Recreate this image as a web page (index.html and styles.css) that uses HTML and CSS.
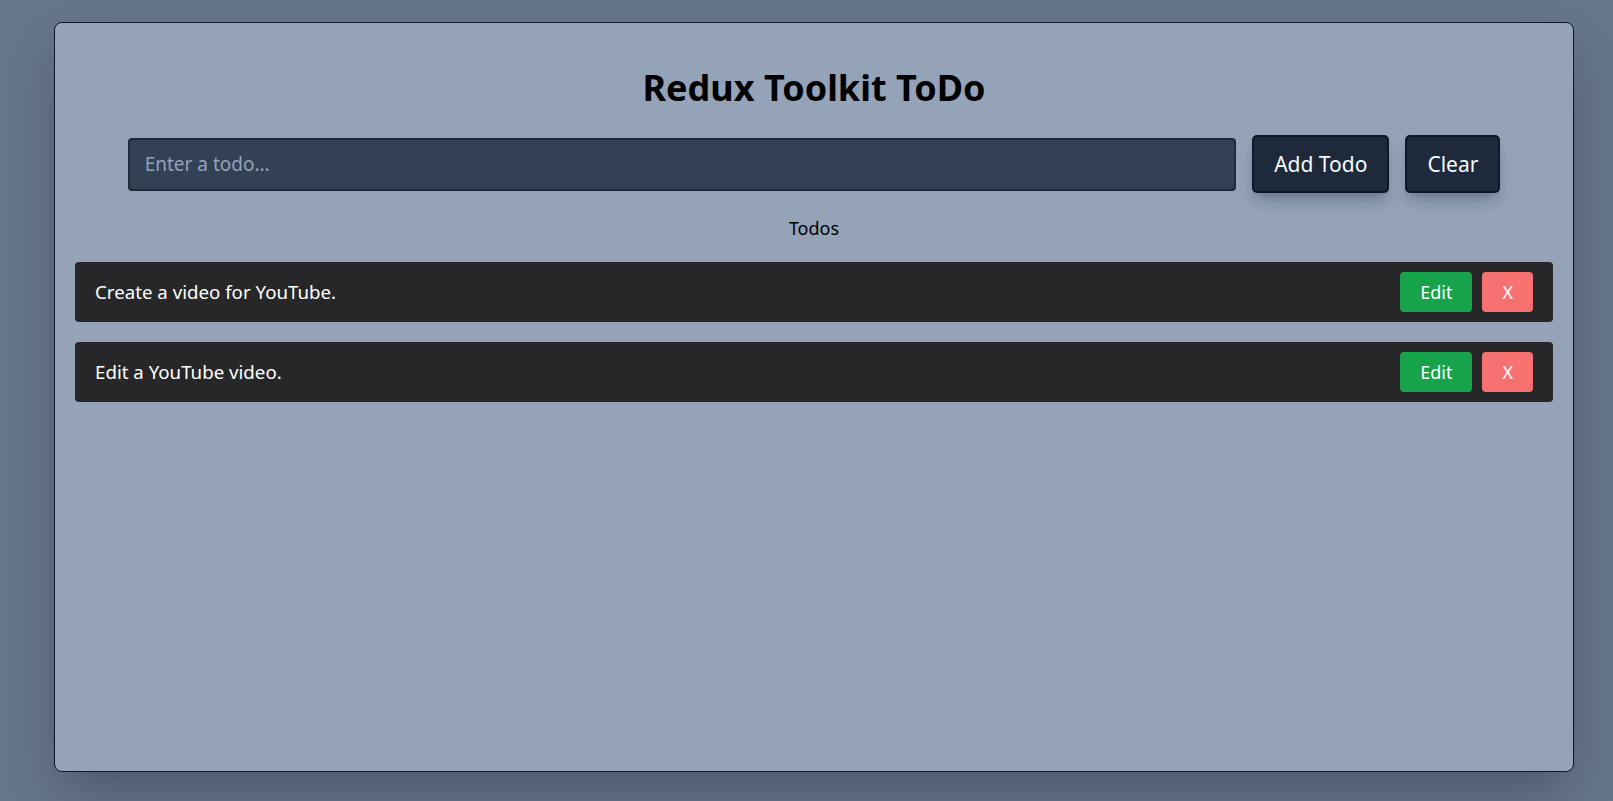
FILE: index.html
```html
<!DOCTYPE html>
<html lang="en">
<head>
<meta charset="utf-8">
<title>Redux Toolkit ToDo</title>
<link rel="stylesheet" href="styles.css">
</head>
<body>
  <main class="app">
    <h1 class="title">Redux Toolkit ToDo</h1>
    <form class="add-form" onsubmit="return false;">
      <input class="todo-input" type="text" placeholder="Enter a todo...">
      <button class="btn-dark" type="submit">Add Todo</button>
      <button class="btn-dark" type="button">Clear</button>
    </form>
    <div class="list-title">Todos</div>
    <ul class="todo-list">
      <li class="todo-item">
        <span class="todo-text">Create a video for YouTube.</span>
        <div class="todo-actions">
          <button class="btn-edit" type="button">Edit</button>
          <button class="btn-delete" type="button">X</button>
        </div>
      </li>
      <li class="todo-item">
        <span class="todo-text">Edit a YouTube video.</span>
        <div class="todo-actions">
          <button class="btn-edit" type="button">Edit</button>
          <button class="btn-delete" type="button">X</button>
        </div>
      </li>
    </ul>
  </main>
</body>
</html>
```
FILE: styles.css
```css
* {
  box-sizing: border-box;
}

html, body {
  margin: 0;
  height: 100%;
}

body {
  background: #64748b;
  font-family: "Noto Sans", "Open Sans", sans-serif;
  color: #000;
  padding: 22px 39px 30px 54px;
}

.app {
  height: 750px;
  background: #94a3b8;
  border: 1px solid #0f172a;
  border-radius: 8px;
  padding: 20px;
  box-shadow: 0 25px 50px -12px rgba(0, 0, 0, 0.28);
}

.title {
  margin: 25px 0 0;
  font-size: 36px;
  line-height: 40px;
  font-weight: 700;
  text-align: center;
}

.add-form {
  display: flex;
  align-items: center;
  justify-content: center;
  gap: 16px;
  margin-top: 27px;
}

.todo-input {
  width: 75%;
  height: 53px;
  background: #334155;
  border: 2px solid #1e293b;
  border-radius: 4px;
  padding: 0 15px;
  font-family: inherit;
  font-size: 19px;
  color: #f1f5f9;
  outline: none;
}

.todo-input::placeholder {
  color: #94a3b8;
}

.btn-dark {
  height: 58px;
  padding: 0 20px;
  background: #1e293b;
  color: #f8fafc;
  border: 2px solid #0f172a;
  border-radius: 5px;
  font-family: inherit;
  font-size: 21px;
  line-height: 28px;
  box-shadow: 0 10px 15px -3px rgba(15, 23, 42, 0.25), 0 4px 6px -4px rgba(15, 23, 42, 0.2);
  cursor: pointer;
}

.list-title {
  margin-top: 21px;
  text-align: center;
  font-size: 18px;
  line-height: 28px;
}

.todo-list {
  list-style: none;
  margin: 20px 0 0;
  padding: 0;
  display: flex;
  flex-direction: column;
  gap: 20px;
}

.todo-item {
  display: flex;
  align-items: center;
  justify-content: space-between;
  height: 60px;
  padding: 0 20px;
  background: #27272a;
  border-radius: 4px;
}

.todo-text {
  color: #ffffff;
  font-size: 18.7px;
  line-height: 28px;
}

.todo-actions {
  display: flex;
  gap: 10px;
}

.btn-edit,
.btn-delete {
  height: 40px;
  padding: 0 20px;
  border: 0;
  border-radius: 4px;
  color: #ffffff;
  font-family: inherit;
  font-size: 18px;
  line-height: 28px;
  cursor: pointer;
}

.btn-edit {
  background: #16a34a;
}

.btn-delete {
  background: #f87171;
}
```
